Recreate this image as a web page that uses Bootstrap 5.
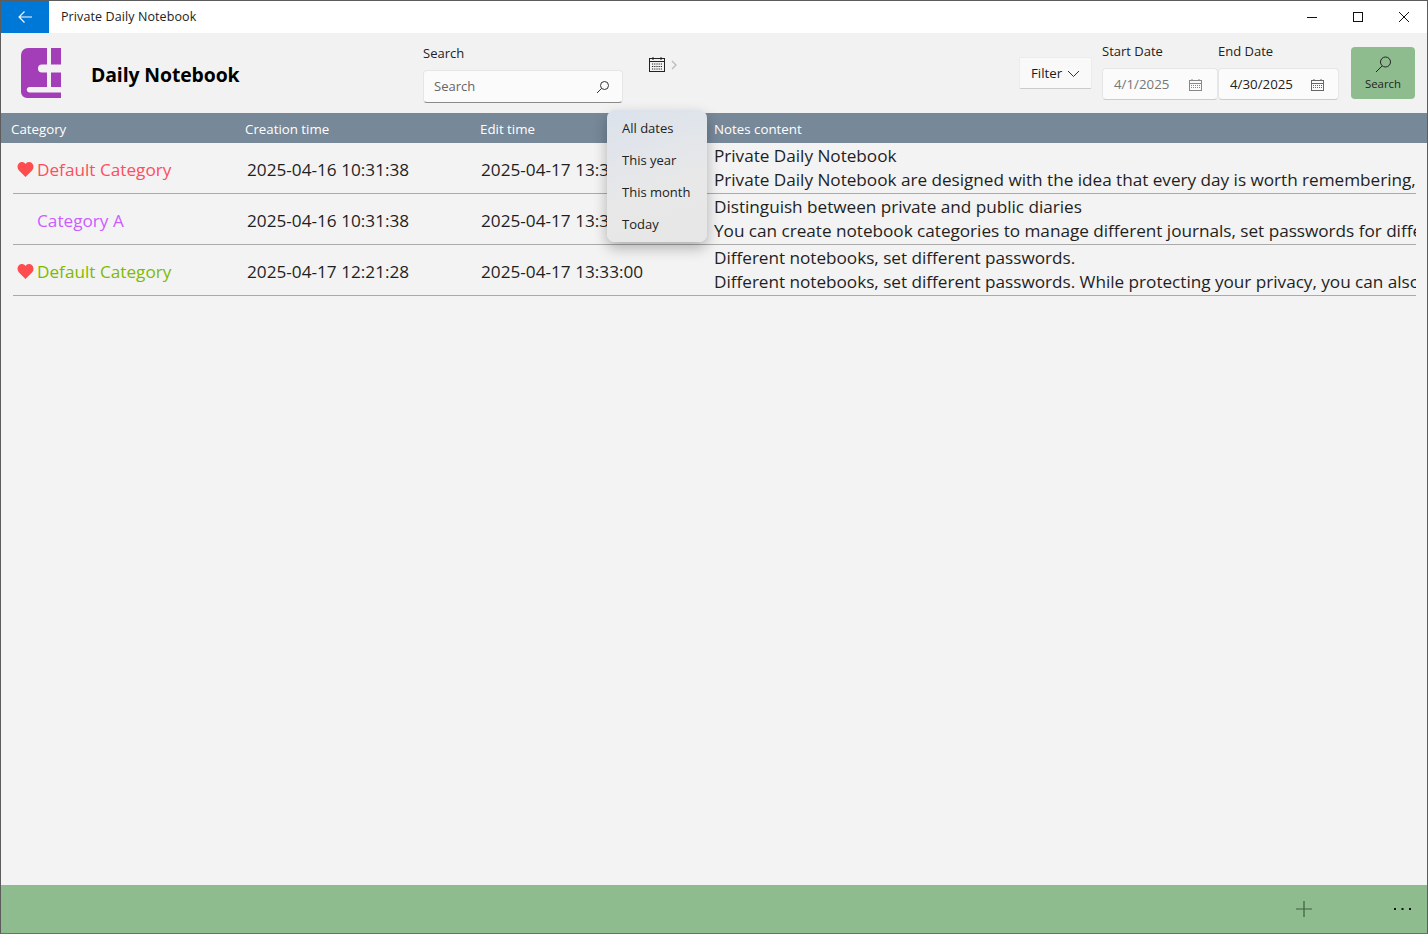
<!DOCTYPE html>
<html lang="en"><head><meta charset="utf-8"><title>Private Daily Notebook</title>
<link href="https://cdn.jsdelivr.net/npm/bootstrap@5.3.0/dist/css/bootstrap.min.css" rel="stylesheet">
<style>
html,body{height:100%;margin:0}
body{font-family:"Open Sans","Noto Sans",sans-serif;background:#f2f2f2;color:#1a1a1a;overflow:hidden}
.win{height:934px;border:1px solid #5c5c5c;border-bottom-color:#6f6f6f;position:relative;background:#f3f3f3}
.tbar{height:32px;background:#fff}
.backbtn{width:48px;background:#0078d7}
.tbar-title{font-size:12.5px;margin-left:12px;color:#222;letter-spacing:.1px}
.winbtn{width:46px}
.hdr{height:80px;padding-left:20px;background:#f2f2f2}
.logo{width:40px;height:50px;margin-top:15px;flex:none}
.apptitle{font-size:19.4px;font-weight:700;color:#000;margin-left:30px;margin-top:27px;width:332px;flex:none;letter-spacing:-.1px}
.flabel{font-size:13px;color:#222;line-height:18px}
.searchcol{width:200px;margin-top:11px;flex:none}
.box{background:#fbfbfb;border:1px solid #e6e6e6;border-radius:4px;font-size:13.300px;color:#222}
.searchbox{height:33px;margin-top:8px;border-bottom:1px solid #8a8a8a;padding:0 12px 0 10px;color:#666;font-size:13px}
.calwrap{margin-left:26px;margin-top:24px;width:370px;flex:none;gap:6px}
.filterbtn{width:73px;height:32px;margin-top:24px;margin-right:10px;flex:none;background:#f9f9f9;border:1px solid #ececec;border-bottom-color:#ccc;font-size:13.300px;padding:1px 11px 0;border-radius:2px}
.datecol{margin-top:9px;flex:none}
.dw1{width:116px;padding:1px 15px 0 11px}
.dw2{width:121px;padding:1px 14px 0 11px}
.datebox{height:32px;margin-top:8px;border-bottom-color:#ccc}
.muted-date{color:#777}
.srchbtn{width:64px;height:52px;margin-left:12px;margin-top:14px;background:#8fbc8f;border-radius:4px;font-size:11.400px;color:#222;line-height:14px;flex:none}
.thead-bar{height:30px;background:#778899;color:#fff;font-size:13.300px;line-height:32px;padding-left:10px}
.tcat{width:234px;flex:none}.tcre{width:235px;flex:none}.tedit{width:234px;flex:none}
.rowsarea{padding:0 11px 0 12px}
.drow{height:51px;border-bottom:1px solid #aaa;font-size:17.200px;color:#1f1f1f;white-space:nowrap;overflow:hidden;padding-top:4px}
.c1{width:234px;flex:none;padding-left:4px;display:flex;align-items:center}
.c2{width:234px;flex:none}
.c3{width:233px;flex:none}
.c4{flex:1;min-width:0;overflow:hidden;line-height:24px;margin-top:-4px;letter-spacing:-.03px}
.hrt{width:17px;height:15px;margin-right:3px;flex:none}
.cred{color:#ff4d5e}.cpur{color:#cc5cff}.cgrn{color:#7fba00}
.bottombar{height:48px;background:#8fbc8f;position:absolute;left:0;right:0;bottom:0}
.plusic{margin-right:82px}
.dotsic{margin-right:15px}
.popmenu{position:absolute;left:606px;top:109px;width:100px;height:132px;border-radius:8px;background:linear-gradient(160deg,#dbe2ec,#e8e8e8 60%,#e6e6e6);box-shadow:0 6px 14px rgba(0,0,0,.28);font-size:13px;color:#222;padding:2px 0 0 15px;z-index:5}
.popitem{height:32px;line-height:32px}
</style></head>
<body>
<div class="win d-flex flex-column">
  <div class="tbar d-flex align-items-stretch">
    <div class="backbtn d-flex align-items-center justify-content-center">
      <svg width="16" height="16" viewBox="0 0 16 16" fill="none" stroke="#fff" stroke-width="1.1"><path d="M15 8H2M7.500 2.500 2 8l5.500 5.500"/></svg>
    </div>
    <div class="tbar-title d-flex align-items-center flex-grow-1">Private Daily Notebook</div>
    <div class="winbtn d-flex align-items-center justify-content-center"><svg width="12" height="12" viewBox="0 0 12 12" stroke="#111" fill="none"><path d="M1 6.500h10"/></svg></div>
    <div class="winbtn d-flex align-items-center justify-content-center"><svg width="12" height="12" viewBox="0 0 12 12" stroke="#111" fill="none"><rect x="1.500" y="1.500" width="9" height="9"/></svg></div>
    <div class="winbtn d-flex align-items-center justify-content-center"><svg width="12" height="12" viewBox="0 0 12 12" stroke="#111" fill="none"><path d="M1 1l10 10M11 1 1 11"/></svg></div>
  </div>
  <div class="hdr d-flex align-items-start">
    <svg class="logo" viewBox="0 0 40 50"><path fill="#a33db8" d="M7 0H26V16.500H21a4 4 0 0 0 0 8h5V39H8a2.800 2.800 0 0 0 0 5.500H40V50H6a6 6 0 0 1-6-6V7a7 7 0 0 1 7-7ZM30 0h10v16.500H30ZM30 24.500h10V39H30Z"/></svg>
    <div class="apptitle">Daily Notebook</div>
    <div class="searchcol">
      <div class="flabel">Search</div>
      <div class="box searchbox d-flex align-items-center justify-content-between"><span>Search</span>
        <svg width="14" height="14" viewBox="0 0 14 14" fill="none" stroke="#333"><circle cx="8.500" cy="5.500" r="4"/><path d="M5.500 8.500 1 13"/></svg></div>
    </div>
    <div class="calwrap d-flex align-items-center">
      <svg width="16" height="15" viewBox="0 0 16 15" fill="none" stroke="#222"><rect x=".5" y="1.500" width="15" height="13"/><path d="M.5 4.500h15M4 0v3M12 0v3"/><path stroke-dasharray="1.200 1" d="M3 7h10M3 9.500h10M3 12h10"/></svg>
      <svg width="6" height="10" viewBox="0 0 6 10" fill="none" stroke="#bbb" stroke-width="1.300"><path d="M1 1l4 4-4 4"/></svg>
    </div>
    <div class="filterbtn d-flex align-items-center justify-content-between"><span>Filter</span><svg width="13" height="8" viewBox="0 0 13 8" fill="none" stroke="#333"><path d="M1 1l5.500 5.500L12 1"/></svg></div>
    <div class="datecol">
      <div class="flabel">Start Date</div>
      <div class="box datebox d-flex align-items-center justify-content-between dw1"><span class="muted-date">4/1/2025</span>
        <svg width="13" height="12" viewBox="0 0 13 12" fill="none" stroke="#888"><rect x=".5" y="1.500" width="12" height="10"/><path d="M.5 4.500h12M3 0v2M10 0v2"/><path stroke-dasharray="1 1" d="M2 6.500h9M2 8.500h9"/></svg></div>
    </div>
    <div class="datecol">
      <div class="flabel">End Date</div>
      <div class="box datebox d-flex align-items-center justify-content-between dw2"><span>4/30/2025</span>
        <svg width="13" height="12" viewBox="0 0 13 12" fill="none" stroke="#666"><rect x=".5" y="1.500" width="12" height="10"/><path d="M.5 4.500h12M3 0v2M10 0v2"/><path stroke-dasharray="1 1" d="M2 6.500h9M2 8.500h9"/></svg></div>
    </div>
    <div class="srchbtn d-flex flex-column align-items-center justify-content-center">
      <svg class="mb-1" width="17" height="17" viewBox="0 0 17 17" fill="none" stroke="#222"><circle cx="10.500" cy="6" r="5"/><path d="M7 10 1 16"/></svg>
      <span>Search</span>
    </div>
  </div>
  <div class="thead-bar d-flex">
    <div class="tcat">Category</div><div class="tcre">Creation time</div><div class="tedit">Edit time</div><div>Notes content</div>
  </div>
  <div class="rowsarea">
    <div class="drow d-flex align-items-center">
      <div class="c1"><svg class="hrt" viewBox="0 0 16 15"><path fill="#ff4d4f" d="M8 15 1.500 8.500C-1.500 5 .5 0 4.500 0 6 0 7.300.8 8 2c.7-1.200 2-2 3.500-2 4 0 6 5 3 8.500Z"/></svg><span class="cred">Default Category</span></div>
      <div class="c2">2025-04-16 10:31:38</div><div class="c3">2025-04-17 13:33:00</div>
      <div class="c4">Private Daily Notebook<br>Private Daily Notebook are designed with the idea that every day is worth remembering, and every thought deserves a place.</div>
    </div>
    <div class="drow d-flex align-items-center">
      <div class="c1"><span class="hrt"></span><span class="cpur">Category A</span></div>
      <div class="c2">2025-04-16 10:31:38</div><div class="c3">2025-04-17 13:33:00</div>
      <div class="c4">Distinguish between private and public diaries<br>You can create notebook categories to manage different journals, set passwords for different notebooks and more.</div>
    </div>
    <div class="drow d-flex align-items-center">
      <div class="c1"><svg class="hrt" viewBox="0 0 16 15"><path fill="#ff4d4f" d="M8 15 1.500 8.500C-1.500 5 .5 0 4.500 0 6 0 7.300.8 8 2c.7-1.200 2-2 3.500-2 4 0 6 5 3 8.500Z"/></svg><span class="cgrn">Default Category</span></div>
      <div class="c2">2025-04-17 12:21:28</div><div class="c3">2025-04-17 13:33:00</div>
      <div class="c4">Different notebooks, set different passwords.<br>Different notebooks, set different passwords. While protecting your privacy, you can also share what you choose.</div>
    </div>
  </div>
  <div class="popmenu"><div class="popitem">All dates</div><div class="popitem">This year</div><div class="popitem">This month</div><div class="popitem">Today</div></div>
  <div class="bottombar d-flex align-items-center justify-content-end">
    <svg class="plusic" width="16" height="16" viewBox="0 0 16 16" stroke="#3f5f3f" stroke-width="1.200"><path d="M8 0v16M0 8h16"/></svg>
    <svg class="dotsic" width="18" height="4" viewBox="0 0 18 4" fill="#111"><rect x="0" y="1" width="2" height="2"/><rect x="7.500" y="1" width="2" height="2"/><rect x="15" y="1" width="2" height="2"/></svg>
  </div>
</div>
</body></html>
